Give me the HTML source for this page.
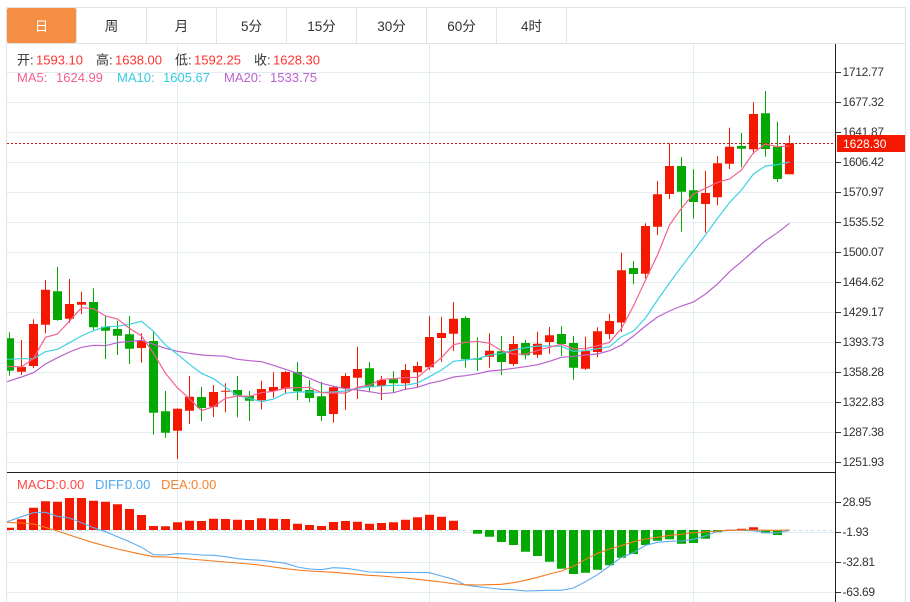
<!DOCTYPE html>
<html lang="zh">
<head>
<meta charset="utf-8">
<title>K线图</title>
<style>
html,body{margin:0;padding:0;background:#fff;width:910px;height:602px;overflow:hidden}
svg{display:block}
text{font-family:"Liberation Sans","Noto Sans CJK SC",sans-serif}
</style>
</head>
<body>
<svg width="910" height="602" viewBox="0 0 910 602" xmlns="http://www.w3.org/2000/svg">
<defs><clipPath id="c"><rect x="7" y="44" width="828.500" height="558"/></clipPath></defs>
<rect width="910" height="602" fill="#fff"/>

<!-- frame and tabs -->
<rect x="7" y="8" width="69" height="35" rx="2" fill="#f58d42"/>
<path d="M6 7.500H905.500M6 43.500H905.500M6.500 7V602M905.500 7V602M76.500 8V43M146.500 8V43M216.500 8V43M286.500 8V43M356.500 8V43M426.500 8V43M496.500 8V43M566.500 8V43" stroke="#e0e2e4" fill="none"/>
<g font-size="13.500" fill="#333" text-anchor="middle">
<text x="41.500" y="31" fill="#fff">日</text>
<text x="111.500" y="31">周</text>
<text x="181.500" y="31">月</text>
<text x="251.500" y="31">5分</text>
<text x="321.500" y="31">15分</text>
<text x="391.500" y="31">30分</text>
<text x="461.500" y="31">60分</text>
<text x="531.500" y="31">4时</text>
</g>

<!-- grid -->
<path d="M7 72.500H835M7 102.500H835M7 132.500H835M7 162.500H835M7 192.500H835M7 222.500H835M7 252.500H835M7 282.500H835M7 312.500H835M7 342.500H835M7 372.500H835M7 402.500H835M7 432.500H835M7 462.500H835M7 502.500H835M7 532.500H835M7 562.500H835M7 592.500H835M177.500 44V602M429.500 44V602M693.500 44V602" stroke="#e3ecf3" fill="none"/>

<g clip-path="url(#c)" fill="none">
<!-- red wicks -->
<path stroke="#f51800" stroke-width="1" d="M21.500 340V375M33.500 319.300V368.300M45.500 280V333.300M69.500 279V322.700M81.500 291.700V314M141.500 333.300V362.700M177.500 408.300V459M189.500 376V424M213.500 385V417M225.500 383.300V412.300M261.500 380.700V409.300M273.500 372.300V397.700M285.500 371V393.300M333.500 386V422.700M345.500 373.300V410M357.500 346.700V399M381.500 376V400M405.500 364V389M417.500 361.700V387.300M429.500 316V370M441.500 316.700V361.700M453.500 302V351M489.500 333.300V367.700M513.500 336V366M537.500 331.700V358M549.500 327V353.700M585.500 336.700V370M597.500 327.300V357.300M609.500 314V339.300M621.500 252.700V332M645.500 223.300V278.300M657.500 181V235M669.500 143.300V199M705.500 170.700V232.700M717.500 156V205.300M729.500 127.700V169M753.500 102.300V154M789.500 135.300V174.300"/>
<!-- green wicks -->
<path stroke="#04a803" stroke-width="1" d="M9.500 332.300V375.700M57.500 266.700V320.700M93.500 288.300V330M105.500 316V359M117.500 320.700V355M129.500 316V364M153.500 331V434.700M165.500 391V437.700M201.500 386.700V421.300M237.500 376V417.300M249.500 391V421M297.500 362V400.300M309.500 380V402.300M321.500 381.700V421M369.500 362V392.300M393.500 371.300V392.700M465.500 316V367.700M477.500 337.300V371M501.500 336V375.300M525.500 340V359.300M561.500 326.300V356M573.500 336V379.700M633.500 261V284.300M681.500 157V231.700M693.500 169.300V218.700M741.500 133V167.300M765.500 91V156.700M777.500 121.700V182"/>
<!-- red bodies -->
<path stroke="#f51800" stroke-width="9" d="M21.500 367V371.700M33.500 324V366M45.500 289.700V324.700M69.500 304V318.700M81.500 302V304.700M141.500 341V348M177.500 408.700V430.700M189.500 396.700V410.700M213.500 392V406.700M225.500 390.700V391.700M261.500 389V400.300M273.500 387V391M285.500 372V388.700M333.500 387.300V414M345.500 376V388.300M357.500 369V377.700M381.500 380V386M405.500 370V383.300M417.500 366V372.300M429.500 337V367.300M441.500 333V338M453.500 318.700V333.700M489.500 350.700V356.700M513.500 344V364M537.500 343.700V354.700M549.500 335.300V342M585.500 351V368.700M597.500 331.300V352M609.500 321V334M621.500 270.300V322.500M645.500 226V273.700M657.500 194.300V226.700M669.500 166V194M705.500 193V204M717.500 163.300V197.300M729.500 146.700V163.700M753.500 114V149.300M789.500 143.300V174.300"/>
<!-- green bodies -->
<path stroke="#04a803" stroke-width="9" d="M9.500 338.300V370.700M57.500 291.300V320M93.500 302V327.300M105.500 326.700V330.700M117.500 329V335.700M129.500 334.300V348.700M153.500 341V412.700M165.500 411.300V432.700M201.500 397V408M237.500 390V395.300M249.500 396V400.700M297.500 372V391.300M309.500 390V398M321.500 396.300V416M369.500 368.300V387.300M393.500 379.300V383.300M465.500 318V359.300M477.500 358.300V359.700M501.500 351.300V362M525.500 343V355.300M561.500 334V344M573.500 343V367.700M633.500 268V274M681.500 166V191.700M693.500 190.300V202M741.500 146V148.700M765.500 113.300V149M777.500 146.700V179"/>

<!-- MA20 -->
<polyline stroke="#b962cf" stroke-width="1.200" points="7,381.700 21.500,377 33.500,372.700 45.500,364 57.500,357.700 69.500,352 81.500,347.300 93.500,345.300 105.500,345.700 117.500,342.700 129.500,341.300 141.500,340.300 153.500,344.300 165.500,348.300 177.500,351.300 189.500,353.300 201.500,355 213.500,355.700 225.500,356.300 237.500,359.300 249.500,360.700 261.500,361.700 273.500,365.300 285.500,369.300 297.500,373.300 309.500,378.300 321.500,383.300 333.500,386.300 345.500,388.700 357.500,390 369.500,391.700 381.500,393.700 393.500,392.700 405.500,389.300 417.500,387.300 429.500,383.300 441.500,380.700 453.500,377 465.500,375.700 477.500,373.700 489.500,371 501.500,370 513.500,368.300 525.500,366.700 537.500,364.700 549.500,361.300 561.500,357.300 573.500,356.300 585.500,355 597.500,354 609.500,350.700 621.500,345 633.500,336 645.500,326 657.500,317 669.500,311 681.500,306 693.500,302 705.500,294 717.500,284 729.500,271.700 741.500,261.700 753.500,251 765.500,240.700 777.500,232.700 789.500,223.300"/>
<!-- MA10 -->
<polyline stroke="#40d0e2" stroke-width="1.200" points="7,359.300 21.500,358.700 33.500,358.700 45.500,351.700 57.500,349.300 69.500,342.700 81.500,336 93.500,330.700 105.500,326.700 117.500,326.300 129.500,324.300 141.500,321.300 153.500,331.300 165.500,345 177.500,354.300 189.500,364.300 201.500,373.300 213.500,378.700 225.500,387.300 237.500,395.700 249.500,398.300 261.500,401.700 273.500,399 285.500,393.300 297.500,392 309.500,392 321.500,392.300 333.500,392 345.500,391 357.500,388.300 369.500,386.700 381.500,386 393.500,385.300 405.500,385.300 417.500,383 429.500,376.700 441.500,370 453.500,361.300 465.500,360 477.500,358.700 489.500,355 501.500,353.300 513.500,350 525.500,347.700 537.500,346 549.500,346 561.500,346.300 573.500,351.300 585.500,350.700 597.500,348.700 609.500,346.700 621.500,336.700 633.500,331 645.500,318 657.500,300 669.500,283 681.500,266.700 693.500,251 705.500,235 717.500,218.300 729.500,202.700 741.500,190 753.500,174 765.500,166 777.500,164.700 789.500,162"/>
<!-- MA5 -->
<polyline stroke="#f4608f" stroke-width="1.200" points="7,366.300 21.500,367 33.500,358.300 45.500,337.300 57.500,334 69.500,321 81.500,307.700 93.500,308.700 105.500,316 117.500,319 129.500,328.300 141.500,336 153.500,353.300 165.500,373.300 177.500,388 189.500,398.700 201.500,410.700 213.500,406.700 225.500,398.300 237.500,396 249.500,396.300 261.500,392.700 273.500,391.300 285.500,388 297.500,387.700 309.500,387.300 321.500,392.700 333.500,393 345.500,393 357.500,387.300 369.500,385 381.500,379.300 393.500,378.700 405.500,377.700 417.500,377.300 429.500,367.300 441.500,357.700 453.500,344.700 465.500,342.300 477.500,341.300 489.500,343.300 501.500,350.700 513.500,354 525.500,354.300 537.500,350.300 549.500,347.300 561.500,344.300 573.500,348.700 585.500,348.700 597.500,345.700 609.500,342.300 621.500,328.300 633.500,306 645.500,280 657.500,255 669.500,225 681.500,208.300 693.500,194 705.500,188.300 717.500,182.300 729.500,179 741.500,170 753.500,152.700 765.500,144 777.500,146.700 789.500,146"/>
<!-- current price line -->
<path stroke="#cc1111" stroke-width="1" stroke-dasharray="2 2" d="M7 143.500H835"/>
<!-- MACD zero -->
<path stroke="#c4dff0" stroke-width="1" stroke-dasharray="3 3" d="M7 530.500H835"/>
<!-- MACD bars -->
<path stroke="#f51800" stroke-width="9" d="M9.500 530V527.700M21.500 530V519.300M33.500 530V507.700M45.500 530V501.300M57.500 530V501.700M69.500 530V498M81.500 530V498M93.500 530V500.700M105.500 530V501.700M117.500 530V504.300M129.500 530V509M141.500 530V515M153.500 530V526M165.500 530V526.300M177.500 530V522.300M189.500 530V520.700M201.500 530V521M213.500 530V518.700M225.500 530V519M237.500 530V519.700M249.500 530V520M261.500 530V518.300M273.500 530V518.700M285.500 530V519M297.500 530V523.700M309.500 530V525M321.500 530V526M333.500 530V522M345.500 530V521M357.500 530V521.700M369.500 530V523.700M381.500 530V523M393.500 530V522.300M405.500 530V519.700M417.500 530V517.300M429.500 530V514.700M441.500 530V516.700M453.500 530V520.700M729.500 530V529.700M741.500 530V528.700M753.500 530V527.300"/>
<path stroke="#04a803" stroke-width="9" d="M477.500 530V533.700M489.500 530V536.700M501.500 530V542M513.500 530V545M525.500 530V551.700M537.500 530V556M549.500 530V561.700M561.500 530V568.700M573.500 530V574M585.500 530V572.700M597.500 530V569.700M609.500 530V565.300M621.500 530V557.700M633.500 530V554M645.500 530V545M657.500 530V540.700M669.500 530V539.300M681.500 530V543.700M693.500 530V543M705.500 530V538.700M717.500 530V532.300M765.500 530V533.300M777.500 530V535"/>
<!-- DIFF -->
<polyline stroke="#5cabef" stroke-width="1.100" points="7,521.700 21.500,516.700 33.500,512.700 45.500,512.300 57.500,516.300 69.500,518 81.500,522.700 93.500,527.700 105.500,531.700 117.500,536.700 129.500,541.700 141.500,547.300 153.500,554.700 165.500,555 177.500,553.700 189.500,554 201.500,555 213.500,555.300 225.500,556.700 237.500,558.700 249.500,559.700 261.500,560.300 273.500,561.700 285.500,563.300 297.500,567 309.500,569 321.500,569.700 333.500,567.700 345.500,568.300 357.500,570 369.500,572 381.500,572.300 393.500,572.700 405.500,572.300 417.500,572.500 429.500,572.700 441.500,576 453.500,579.300 465.500,585 477.500,586.700 489.500,588 501.500,589.300 513.500,589.700 525.500,591 537.500,590.700 549.500,590.300 561.500,590.300 573.500,588 585.500,581.700 597.500,574.700 609.500,566 621.500,557.300 633.500,552.700 645.500,545.300 657.500,542.300 669.500,541.300 681.500,541 693.500,539.300 705.500,536 717.500,531.300 729.500,530.300 741.500,530.300 753.500,530.700 765.500,532.700 777.500,533 789.500,530.300"/>
<!-- DEA -->
<polyline stroke="#f37a1f" stroke-width="1.100" points="7,522.300 21.500,523 33.500,524 45.500,527.300 57.500,531 69.500,535 81.500,539 93.500,542.700 105.500,546 117.500,549 129.500,551.700 141.500,554.300 153.500,556.700 165.500,557 177.500,557.700 189.500,559 201.500,560 213.500,561 225.500,562 237.500,563 249.500,564 261.500,565.300 273.500,567 285.500,568.700 297.500,570 309.500,571 321.500,571.700 333.500,572.300 345.500,573.300 357.500,574.300 369.500,575.300 381.500,576 393.500,577 405.500,578 417.500,579.300 429.500,580.700 441.500,582 453.500,583.700 465.500,584.700 477.500,585 489.500,584.700 501.500,584.300 513.500,582.700 525.500,580.300 537.500,577.300 549.500,574 561.500,571 573.500,566.300 585.500,559.300 597.500,553.300 609.500,549 621.500,545.700 633.500,541.700 645.500,539 657.500,537.300 669.500,535.300 681.500,534.300 693.500,532.700 705.500,532 717.500,531 729.500,530.300 741.500,530 753.500,530 765.500,530.300 777.500,530.300 789.500,530"/>
</g>

<!-- separator and axis -->
<path d="M7 472.500H835.500M835.500 44V602" stroke="#222" fill="none"/>
<path d="M836 72.500H841M836 102.500H841M836 132.500H841M836 162.500H841M836 192.500H841M836 222.500H841M836 252.500H841M836 282.500H841M836 312.500H841M836 342.500H841M836 372.500H841M836 402.500H841M836 432.500H841M836 462.500H841M836 502.500H841M836 532.500H841M836 562.500H841M836 592.500H841" stroke="#333" fill="none"/>

<g font-size="12" fill="#333" letter-spacing="-0.300">
<text x="842.500" y="76">1712.77</text>
<text x="842.500" y="106">1677.32</text>
<text x="842.500" y="136">1641.87</text>
<text x="842.500" y="166">1606.42</text>
<text x="842.500" y="196">1570.97</text>
<text x="842.500" y="226">1535.52</text>
<text x="842.500" y="256">1500.07</text>
<text x="842.500" y="286">1464.62</text>
<text x="842.500" y="316">1429.17</text>
<text x="842.500" y="346">1393.73</text>
<text x="842.500" y="376">1358.28</text>
<text x="842.500" y="406">1322.83</text>
<text x="842.500" y="436">1287.38</text>
<text x="842.500" y="466">1251.93</text>
<text x="842.500" y="506">28.95</text>
<text x="842.500" y="536">-1.93</text>
<text x="842.500" y="566">-32.81</text>
<text x="842.500" y="596">-63.69</text>
</g>
<rect x="837" y="135" width="68" height="17" fill="#f51800"/>
<text x="843" y="148" font-size="12" fill="#fff">1628.30</text>

<!-- legends -->
<g font-size="13" fill="#333">
<text x="17" y="64.500">开:</text>
<text x="96" y="64.500">高:</text>
<text x="175" y="64.500">低:</text>
<text x="254" y="64.500">收:</text>
</g>
<g font-size="13" fill="#f33">
<text x="36" y="64.500">1593.10</text>
<text x="115" y="64.500">1638.00</text>
<text x="194" y="64.500">1592.25</text>
<text x="273" y="64.500">1628.30</text>
</g>
<g font-size="13">
<text x="17" y="82" fill="#f4608f">MA5:</text>
<text x="56" y="82" fill="#f4608f">1624.99</text>
<text x="117" y="82" fill="#35cbe0">MA10:</text>
<text x="163" y="82" fill="#35cbe0">1605.67</text>
<text x="224" y="82" fill="#b962cf">MA20:</text>
<text x="270" y="82" fill="#b962cf">1533.75</text>
<text x="17" y="489" fill="#f44">MACD:</text>
<text x="59" y="489" fill="#f44">0.00</text>
<text x="95" y="489" fill="#4fa8f2">DIFF:</text>
<text x="125" y="489" fill="#4fa8f2">0.00</text>
<text x="161" y="489" fill="#f58330">DEA:</text>
<text x="191" y="489" fill="#f58330">0.00</text>
</g>
</svg>
</body>
</html>
